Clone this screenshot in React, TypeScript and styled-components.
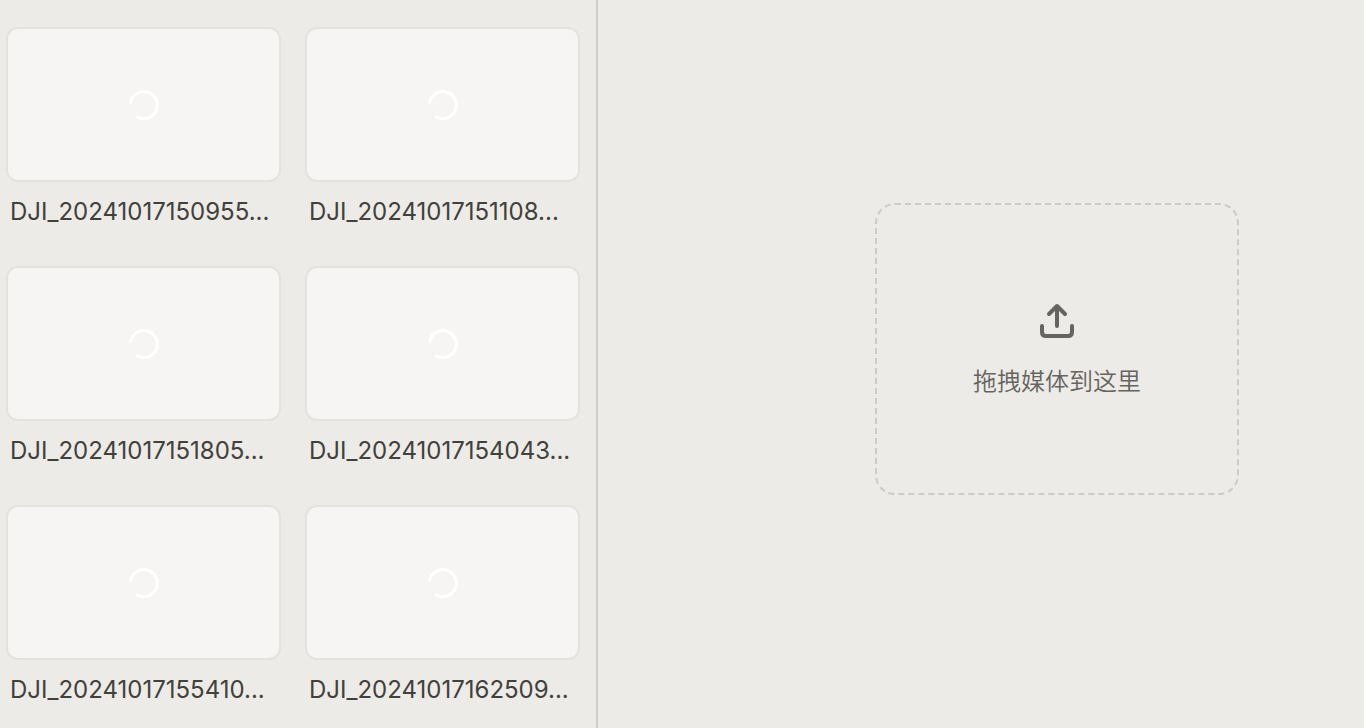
import React from 'react';
import styled, { createGlobalStyle } from 'styled-components';

const GlobalStyle = createGlobalStyle`
  *, *::before, *::after { box-sizing: border-box; }
  body {
    margin: 0;
    background: #ecebe7;
    color: #42403b;
    font-family: Inter, "Noto Sans CJK SC", sans-serif;
  }
`;

const Workspace = styled.div`
  display: flex;
  height: 100vh;
  overflow: hidden;
`;

const Library = styled.aside`
  flex: 0 0 598px;
  padding: 27px 16px 0 6px;
  border-right: 2px solid #cfcec9;
  overflow: hidden;
`;

const MediaGrid = styled.ul`
  display: grid;
  grid-template-columns: repeat(2, 1fr);
  gap: 38px 24px;
  margin: 0;
  padding: 0;
  list-style: none;
`;

const MediaItem = styled.li`
  display: flex;
  flex-direction: column;
  gap: 14px;
  min-width: 0;
`;

const Thumbnail = styled.div`
  display: flex;
  align-items: center;
  justify-content: center;
  height: 155px;
  border: 2px solid #e3e2df;
  border-radius: 12px;
  background: #f6f5f3;
`;

const FileName = styled.span`
  padding-left: 4px;
  font-size: 24px;
  font-weight: 380;
  line-height: 32px;
  white-space: nowrap;
`;

const Preview = styled.main`
  display: flex;
  flex: 1;
  align-items: center;
  justify-content: center;
  padding: 0 0 30px 152px;
`;

const DropZone = styled.button`
  display: flex;
  flex-direction: column;
  align-items: center;
  justify-content: center;
  gap: 26px;
  width: 364px;
  height: 292px;
  padding: 4px 0 0;
  border: 2px dashed #cccbc7;
  border-radius: 20px;
  background: transparent;
  color: #66645f;
  font-family: inherit;
  font-size: 24px;
  font-weight: 350;
  line-height: 36px;
`;

const Spinner = () => (
  <svg width="32" height="32" viewBox="0 0 32 32" fill="none" aria-hidden="true">
    <path
      d="M2.6 13.4A13.5 13.5 0 1 1 9.4 28"
      stroke="#fff"
      strokeWidth="3"
      strokeLinecap="round"
    />
  </svg>
);

const UploadIcon = () => (
  <svg
    width="36"
    height="36"
    viewBox="0 0 36 36"
    fill="none"
    stroke="currentColor"
    strokeWidth="4"
    strokeLinecap="round"
    strokeLinejoin="round"
    aria-hidden="true"
  >
    <path d="M18 24V4M10 12L18 4L26 12" />
    <path d="M3 24V30Q3 34 7 34H29Q33 34 33 30V24" />
  </svg>
);

const files = [
  'DJI_20241017150955...',
  'DJI_20241017151108...',
  'DJI_20241017151805...',
  'DJI_20241017154043...',
  'DJI_20241017155410...',
  'DJI_20241017162509...',
];

export default function App() {
  return (
    <>
      <GlobalStyle />
      <Workspace>
        <Library>
          <MediaGrid>
            {files.map((name) => (
              <MediaItem key={name}>
                <Thumbnail>
                  <Spinner />
                </Thumbnail>
                <FileName>{name}</FileName>
              </MediaItem>
            ))}
          </MediaGrid>
        </Library>
        <Preview>
          <DropZone type="button">
            <UploadIcon />
            <span>拖拽媒体到这里</span>
          </DropZone>
        </Preview>
      </Workspace>
    </>
  );
}
